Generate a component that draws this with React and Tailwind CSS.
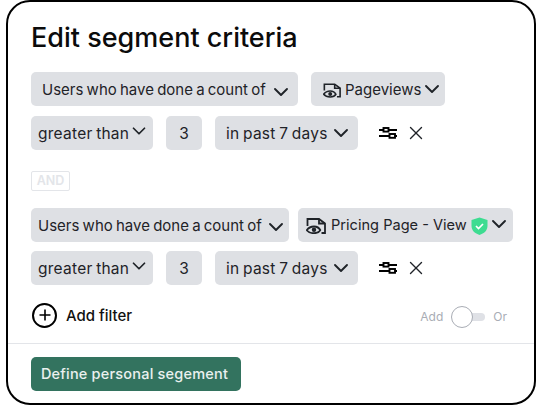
import { ChevronDown, X } from 'lucide-react';

const font = { fontFamily: 'Inter, sans-serif' };

function PageViewIcon({ width, height }) {
  return (
    <svg width={width} height={height} viewBox="0 0 20 16" fill="none" stroke="#1f2328" strokeWidth="1.8" className="shrink-0">
      <path d="M1.500 8V1h11.500l6 4.500V15h-3.500" />
      <path d="M13 1v4.500h6" />
      <path d="M0.500 12.500c2-3 4.500-4 7.500-4s5 1 6.500 4" />
      <path d="M0.500 12c2 2.500 4.500 3.200 7.500 3.200s5-.7 6.500-3.200" />
      <circle cx="8" cy="11.800" r="2.200" fill="#1f2328" stroke="none" />
    </svg>
  );
}

function ShieldIcon() {
  return (
    <svg width="17" height="18" viewBox="0 0 17 18" className="shrink-0">
      <path d="M8.500 0.500l8 2.500v6c0 4.500-3.500 7.500-8 9-4.500-1.500-8-4.500-8-9V3z" fill="#3ddc91" />
      <path d="M5 9l2.500 2.500 4.500-4.500" fill="none" stroke="#ffffff" strokeWidth="1.700" />
    </svg>
  );
}

function SlidersIcon() {
  return (
    <svg width="18" height="12" viewBox="0 0 18 12" fill="none" stroke="#000000" strokeWidth="1.900" className="shrink-0">
      <path d="M0 3h4M10 3h8M0 9h10M16 9h2" />
      <rect x="4.500" y="1" width="5" height="3.600" />
      <rect x="10.500" y="7" width="5.500" height="3.800" />
    </svg>
  );
}

function Pill({ children, className }) {
  return (
    <div className={`h-[34px] shrink-0 flex items-center pt-[2px] rounded-[5px] bg-[#dee0e4] text-[#1f2328] whitespace-nowrap ${className}`}>
      {children}
    </div>
  );
}

function Chevron({ size, className }) {
  return <ChevronDown size={size} strokeWidth={1.9} className={`shrink-0 text-[#1f2328] ${className}`} />;
}

function ConditionRow() {
  return (
    <div className="flex items-center">
      <Pill className="w-[122px] pl-[7px] text-[15.5px] tracking-[0.25px] [word-spacing:-1px]">
        greater than
        <Chevron size={22} className="-ml-[1.5px] -mt-[6px]" />
      </Pill>
      <Pill className="w-[36px] ml-[13px] justify-center text-[15.5px]">3</Pill>
      <Pill className="w-[143px] ml-[13px] pl-[11px] text-[15.5px] tracking-[0.25px] [word-spacing:-1px]">
        in past 7 days
        <Chevron size={24} className="ml-[1.5px] -mt-[2px]" />
      </Pill>
      <div className="ml-[21px] flex items-center">
        <SlidersIcon />
      </div>
      <X size={22} strokeWidth={1.5} className="ml-[8px] text-[#1f2328]" />
    </div>
  );
}

export default function App() {
  return (
    <div className="w-[541px] h-[406px] bg-white" style={font}>
      <div className="ml-[6px] w-[530px] h-[405px] border-2 border-black rounded-[24px] flex flex-col">
        <div className="px-[23px] flex-1">
          <h1 className="mt-[19px] text-[27px] leading-[34px] font-medium text-[#0b0b0b]">Edit segment criteria</h1>

          <div className="flex items-center mt-[17px]">
            <Pill className="w-[267px] pl-[11px] text-[15px] [word-spacing:-1px]">
              Users who have done a count of
              <Chevron size={24} className="ml-[3.5px] mt-[3px]" />
            </Pill>
            <Pill className="w-[134px] ml-[13px] pl-[12px] text-[15px]">
              <PageViewIcon width={18} height={15} />
              <span className="ml-[4px]">Pageviews</span>
              <Chevron size={24} className="-ml-[1.5px] -mt-[2px]" />
            </Pill>
          </div>
          <div className="mt-[10px]">
            <ConditionRow />
          </div>

          <div className="mt-[21px] w-[39px] h-[20px] flex items-center justify-center rounded-[2px] border border-[#e3e5e9] text-[12.5px] font-semibold text-[#e3e5e9]">
            AND
          </div>

          <div className="flex items-center mt-[17px]">
            <Pill className="w-[258px] pl-[7px] text-[15px] [word-spacing:-1px]">
              Users who have done a count of
              <Chevron size={24} className="ml-[2px] mt-[2px]" />
            </Pill>
            <Pill className="w-[215px] ml-[9px] pl-[8px] text-[14.6px]">
              <PageViewIcon width={20} height={16} />
              <span className="ml-[5px]">Pricing Page - View</span>
              <span className="ml-[4px] flex"><ShieldIcon /></span>
              <Chevron size={24} className="-ml-[0.5px] -mt-[4px]" />
            </Pill>
          </div>
          <div className="mt-[9px]">
            <ConditionRow />
          </div>

          <div className="flex items-center justify-between mt-[17px] h-[26px]">
            <div className="flex items-center">
              <div className="ml-[1px] w-[25px] h-[25px] rounded-full border-2 border-black flex items-center justify-center">
                <svg width="12" height="12" viewBox="0 0 12 12" stroke="#000000" strokeWidth="1.600">
                  <path d="M6 0.500v11M0.500 6h11" />
                </svg>
              </div>
              <span className="ml-[9px] pt-[2px] text-[15px] font-medium text-[#111111]">Add filter</span>
            </div>
            <div className="flex items-center mt-[4px] text-[12px] text-[#a9adb5] mr-[4px]">
              <span>Add</span>
              <div className="relative ml-[8px] w-[34px] h-[8px] mr-[8px]">
                <div className="absolute right-0 top-0 w-[24px] h-[8px] rounded-full bg-[#dfe1e6]" />
                <div className="absolute left-0 -top-[7px] w-[22px] h-[22px] rounded-full border border-[#a9adb5] bg-white" />
              </div>
              <span>Or</span>
            </div>
          </div>
        </div>

        <div className="border-t border-[#e3e5e9] h-[60px] px-[23px] pt-[13px]">
          <button className="w-[210px] h-[34px] pr-[3px] rounded-[5px] bg-[#33735f] text-white/90 text-[14.5px] font-medium tracking-[0.2px]">
            Define personal segement
          </button>
        </div>
      </div>
    </div>
  );
}
